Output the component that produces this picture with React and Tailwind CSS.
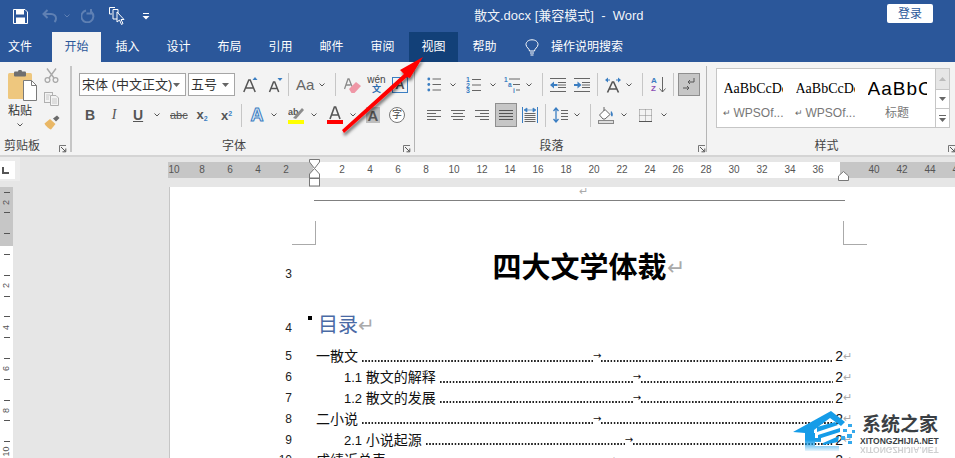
const CJK = "[font-family:'Liberation_Sans','Noto_Sans_CJK_SC',sans-serif]";

function Chev({ className = "", color = "#555" }) {
  return (
    <svg width="6" height="4" viewBox="0 0 6 4" className={`shrink-0 ${className}`}>
      <path d="M0.5 0.5 L3 3 L5.5 0.5" fill="none" stroke={color} strokeWidth="1" />
    </svg>
  );
}

function Sep({ className = "" }) {
  return <div className={`w-px h-[23px] bg-[#c6c6c6] shrink-0 ${className}`} />;
}

function Launcher({ className = "" }) {
  return (
    <svg width="8" height="8" viewBox="0 0 8 8" className={`shrink-0 ${className}`}>
      <path d="M0.5 7 V0.5 H7" fill="none" stroke="#777" />
      <path d="M2 2 L6.5 6.5 M6.8 3.5 V6.8 H3.5" fill="none" stroke="#555" />
    </svg>
  );
}

function Footer({ label, launcherClass = "mr-[3px]", className = "" }) {
  return (
    <div className={`mt-auto mb-[1px] h-[16px] grid grid-cols-[1fr_auto_1fr] items-center ${className}`}>
      <div />
      <div className="text-[12px] leading-[16px] text-[#444] mr-[18px]">{label}</div>
      <div className="justify-self-end flex items-end h-full pb-[1px]"><Launcher className={launcherClass} /></div>
    </div>
  );
}

function Lines({ rows, w = 14, h = 14, color = "#666", sw = 1 }) {
  return (
    <svg width={w} height={h} viewBox={`0 0 ${w} ${h}`} className="shrink-0">
      {rows.map(([x1, x2, y], i) => (
        <line key={i} x1={x1} x2={x2} y1={y + 0.5} y2={y + 0.5} stroke={color} strokeWidth={sw} />
      ))}
    </svg>
  );
}

function Letter({ children, className = "", w }) {
  return <div className={`shrink-0 text-center ${className}`} style={w ? { width: w } : undefined}>{children}</div>;
}

function GrowA({ up }) {
  return (
    <svg width="15" height="18" viewBox="0 0 15 18" className="shrink-0">
      <path d={up ? "M0.8 16 L5.8 4 H7.2 L12.2 16 M3 12 H10" : "M1.5 16 L5.5 6 H6.7 L10.7 16 M3.3 12.5 H9"} fill="none" stroke="#555" strokeWidth="1.5" />
      <path d={up ? "M9.5 4 L12 1 L14.5 4 Z" : "M9.5 2 H14.5 L12 5 Z"} fill="#3b7ec2" />
    </svg>
  );
}

function Bullets() {
  return (
    <svg width="14" height="15" viewBox="0 0 14 15" className="shrink-0">
      {[2, 7.5, 13].map((y) => (
        <g key={y}>
          <circle cx="1.8" cy={y} r="1.4" fill="#3b7ec2" />
          <line x1="5.5" x2="14" y1={y} y2={y} stroke="#666" />
        </g>
      ))}
    </svg>
  );
}

function Numbers() {
  return (
    <svg width="15" height="16" viewBox="0 0 15 16" className="shrink-0">
      {[["1", 2.5], ["2", 8], ["3", 13.5]].map(([t, y]) => (
        <g key={t}>
          <text x="0" y={y + 2.5} fontSize="7" fontWeight="700" fill="#3b7ec2" fontFamily="Liberation Sans">{t}</text>
          <line x1="6" x2="15" y1={y} y2={y} stroke="#666" />
        </g>
      ))}
    </svg>
  );
}

function Multi() {
  return (
    <svg width="17" height="17" viewBox="0 0 17 17" className="shrink-0">
      <text x="0" y="5.5" fontSize="6.5" fontWeight="700" fill="#3b7ec2" fontFamily="Liberation Sans">1</text>
      <line x1="5" x2="16" y1="3" y2="3" stroke="#666" />
      <text x="4" y="11" fontSize="6.5" fontWeight="700" fill="#3b7ec2" fontFamily="Liberation Sans">a</text>
      <line x1="9" x2="16" y1="8.5" y2="8.5" stroke="#666" />
      <text x="9" y="16.5" fontSize="6.5" fontWeight="700" fill="#3b7ec2" fontFamily="Liberation Sans">i</text>
      <line x1="12" x2="16" y1="14" y2="14" stroke="#666" />
    </svg>
  );
}

function Indent({ inc }) {
  return (
    <svg width="16" height="14" viewBox="0 0 16 14" className="shrink-0">
      {[0.5, 13.5].map((y) => <line key={y} x1="0" x2="16" y1={y} y2={y} stroke="#666" />)}
      {[4.5, 7, 9.5].map((y) => <line key={y} x1="8" x2="16" y1={y} y2={y} stroke="#666" />)}
      {inc
        ? <path d="M0 6 H3.5 V3.5 L7.5 7 L3.5 10.5 V8 H0 Z" fill="#3b7ec2" />
        : <path d="M7.5 6 H4 V3.5 L0 7 L4 10.5 V8 H7.5 Z" fill="#3b7ec2" />}
    </svg>
  );
}

function Scissors() {
  return (
    <svg width="15" height="15" viewBox="0 0 15 15" className="shrink-0">
      <path d="M3 0.5 L10 10 M12 0.5 L5 10" stroke="#a9a9a9" strokeWidth="1.4" fill="none" />
      <circle cx="3.5" cy="12" r="2.4" fill="none" stroke="#a9a9a9" strokeWidth="1.3" />
      <circle cx="11.5" cy="12" r="2.4" fill="none" stroke="#a9a9a9" strokeWidth="1.3" />
    </svg>
  );
}

function CopyIcon() {
  return (
    <svg width="15" height="14" viewBox="0 0 15 14" className="shrink-0">
      <rect x="0.5" y="0.5" width="8" height="10" fill="#f3f3f3" stroke="#b0b0b0" />
      <path d="M6.5 3.5 H12 L14.5 6 V13.5 H6.5 Z" fill="#f3f3f3" stroke="#b0b0b0" />
      <path d="M8 7 H13 M8 9 H13 M8 11 H13 M2 3 H6 M2 5 H5 M2 7 H5" stroke="#c8c8c8" />
    </svg>
  );
}

function Brush() {
  return (
    <svg width="16" height="15" viewBox="0 0 16 15" className="shrink-0">
      <path d="M9 3.5 L13 0.5 L15.5 3 L12 6.5 Z" fill="#6a6a6a" />
      <path d="M6 4 L11.5 9 L7 14.5 C5 14 1.5 11 0.5 8.5 Z" fill="#e9b765" />
    </svg>
  );
}

function Paste() {
  return (
    <svg width="29" height="31" viewBox="0 0 29 31" className="shrink-0">
      <rect x="0" y="3" width="24" height="26" rx="1.5" fill="#eec77e" />
      <rect x="6" y="1.5" width="12" height="5" rx="1" fill="#6f6f6f" />
      <rect x="10" y="0" width="4" height="3" rx="1.4" fill="#6f6f6f" />
      <path d="M15.5 10.5 H23.5 L28.5 15.5 V30.5 H15.5 Z" fill="#fff" stroke="#7a7a7a" />
      <path d="M23.5 10.5 V15.5 H28.5" fill="none" stroke="#7a7a7a" />
    </svg>
  );
}

function Highlighter() {
  return (
    <div className="w-[16px] h-[18px] flex flex-col items-center shrink-0">
      <svg width="16" height="14" viewBox="0 0 16 14">
        <text x="0" y="9" fontSize="9" fontWeight="700" fill="#555" fontFamily="Liberation Sans">ab</text>
        <path d="M5 12 L14 2 L16 4 L8 13 Z" fill="#8c8c8c" />
      </svg>
      <div className="w-[16px] h-[4px] bg-[#ffff00]" />
    </div>
  );
}

function ColorA() {
  return (
    <div className="w-[16px] h-[18px] flex flex-col items-center shrink-0">
      <svg width="16" height="14" viewBox="0 0 16 14">
        <path d="M3 13 L7.4 1 H8.6 L13 13 M4.8 9 H11.2" fill="none" stroke="#555" strokeWidth="1.6" />
      </svg>
      <div className="w-[16px] h-[4px] bg-[#ff0000]" />
    </div>
  );
}

function Eraser() {
  return (
    <svg width="17" height="18" viewBox="0 0 17 18" className="shrink-0">
      <path d="M0.5 13 L4 3 H5 L8 10.5 M2 9 H6.5" fill="none" stroke="#8a8a8a" strokeWidth="1.3" />
      <path d="M5 13 L12 6 L17 10 L10.5 17 H7.5 Z" fill="#ef97a6" />
    </svg>
  );
}

function Wen() {
  return (
    <div className="w-[17px] h-[19px] flex flex-col items-center shrink-0 leading-none">
      <div className="text-[10px] leading-[10px] text-[#444] whitespace-nowrap">wén</div>
      <div className="text-[9px] leading-[9px] text-[#2b6cb0] font-bold">文</div>
    </div>
  );
}

function BoxA() {
  return (
    <div className="w-[16px] h-[16px] border border-[#3b7ec2] flex items-center justify-center text-[13px] leading-none text-[#555] font-bold shrink-0">A</div>
  );
}

function CircleZi() {
  return (
    <div className="w-[16px] h-[16px] rounded-full border border-[#777] flex items-center justify-center text-[10px] leading-none text-[#444] shrink-0 bg-white">字</div>
  );
}

function Direction() {
  return (
    <svg width="16" height="16" viewBox="0 0 16 16" className="shrink-0">
      <path d="M2.5 15.5 L7.4 5 H8.6 L13.5 15.5 M4.5 12 H11.5" fill="none" stroke="#555" strokeWidth="1.6" />
      <path d="M0 3 L3 0.5 V5.5 Z M16 3 L13 0.5 V5.5 Z" fill="#3b7ec2" />
      <path d="M3 3 H5 M11 3 H13" stroke="#3b7ec2" />
    </svg>
  );
}

function Sort() {
  return (
    <div className="flex items-center shrink-0 w-[15px] h-[17px]">
      <div className="flex flex-col text-[8px] leading-[8px] font-bold w-[8px]">
        <span className="text-[#3b7ec2]">A</span>
        <span className="text-[#8a4fb5]">Z</span>
      </div>
      <svg width="7" height="16" viewBox="0 0 7 16"><path d="M3.5 0 V15 M0.5 11.5 L3.5 15 L6.5 11.5" fill="none" stroke="#666" /></svg>
    </div>
  );
}

function Pilcrow() {
  return (
    <div className="w-[22px] h-[23px] bg-[#c6c6c6] border border-[#8f8f8f] flex items-center justify-center shrink-0">
      <svg width="14" height="15" viewBox="0 0 14 15">
        <path d="M12 1 V5 H6 M8 3 L6 5 L8 7" fill="none" stroke="#555" />
        <path d="M1 11 H7 M5 9 L7 11 L5 13" fill="none" stroke="#555" />
      </svg>
    </div>
  );
}

function Distribute() {
  return (
    <svg width="16" height="16" viewBox="0 0 16 16" className="shrink-0">
      <path d="M0.5 0 V16 M15.5 0 V16" stroke="#3b7ec2" />
      <path d="M3 3 H13 M2 3 L5 1 V5 Z M14 3 L11 1 V5 Z" fill="#3b7ec2" stroke="#3b7ec2" strokeWidth="0.7" />
      {[6.5, 8.5, 10.5, 12.5, 14.5].map((y) => <line key={y} x1="2.5" x2="13.5" y1={y} y2={y} stroke="#666" />)}
    </svg>
  );
}

function LineSpacing() {
  return (
    <svg width="15" height="16" viewBox="0 0 15 16" className="shrink-0">
      <path d="M3 1 V15 M0.5 4 L3 1 L5.5 4 M0.5 12 L3 15 L5.5 12" fill="none" stroke="#3b7ec2" strokeWidth="1.3" />
      {[3.5, 6.5, 9.5, 12.5].map((y) => <line key={y} x1="8" x2="15" y1={y} y2={y} stroke="#666" />)}
    </svg>
  );
}

function Shading() {
  return (
    <svg width="16" height="18" viewBox="0 0 16 18" className="shrink-0">
      <path d="M1.5 9 L7 3.5 L12 8.5 L7 13 H5 Z" fill="#fff" stroke="#666" />
      <path d="M6 1 V5" stroke="#666" />
      <path d="M13 5 C15.5 7 15 10 14 10.5 C12.5 10 12.5 7 13 5" fill="#3b7ec2" />
      <rect x="0.5" y="14.5" width="15" height="3" fill="#ddd" stroke="#888" />
    </svg>
  );
}

function BordersIcon() {
  return (
    <svg width="13" height="13" viewBox="0 0 13 13" className="shrink-0">
      <path d="M0.5 0.5 H13 M0.5 6.5 H13 M0.5 0.5 V13 M6.5 0.5 V13 M12.5 0.5 V13" stroke="#888" strokeDasharray="1 1" fill="none" />
      <path d="M0 12.5 H13" stroke="#555" />
    </svg>
  );
}

const L = (rows) => <Lines rows={rows} />;

function Clipboard() {
  return (
    <div className="w-[70px] flex flex-col shrink-0">
      <div className="flex h-[70px]">
        <div className="w-[44px] flex flex-col items-start pl-[8px] pt-[8px]">
          <Paste />
          <div className="text-[12px] leading-[16px] text-[#333] mt-[2px]">粘贴</div>
          <Chev className="ml-[9px] mt-[4px]" />
        </div>
        <div className="flex flex-col items-start pt-[6px]">
          <Scissors />
          <div className="mt-[9px]"><CopyIcon /></div>
          <div className="mt-[9px]"><Brush /></div>
        </div>
      </div>
      <div className="mt-auto mb-[1px] h-[16px] flex items-center pl-[4px]">
        <div className="text-[12px] leading-[16px] text-[#444]">剪贴板</div>
        <Launcher className="ml-[19px] mt-[5px]" />
      </div>
    </div>
  );
}

function SelectBox({ text, className }) {
  return (
    <div className={`h-[23px] bg-white border border-[#a6a6a6] flex items-center pl-[2px] pr-[5px] shrink-0 ${className}`}>
      <span className="text-[13px] leading-none text-[#333] flex-1 whitespace-nowrap">{text}</span>
      <svg width="7" height="4" viewBox="0 0 7 4"><path d="M0 0 H7 L3.5 4 Z" fill="#666" /></svg>
    </div>
  );
}

function FontGroup() {
  return (
    <div className="w-[342px] flex flex-col shrink-0">
      <div className="flex items-center h-[23px] mt-[11px]">
        <SelectBox text="宋体 (中文正文)" className="ml-[7px] w-[107px]" />
        <SelectBox text="五号" className="ml-[2px] w-[47px]" />
        <div className="ml-[8px]"><GrowA up /></div>
        <div className="ml-[10px]"><GrowA /></div>
        <Sep className="ml-[5px]" />
        <div className="ml-[7px] w-[15px] text-[15px] leading-none text-[#666] whitespace-nowrap shrink-0">Aa</div>
        <Chev className="ml-[8px]" />
        <Sep className="ml-[10px]" />
        <div className="ml-[8px]"><Eraser /></div>
        <div className="ml-[7px]"><Wen /></div>
        <div className="ml-[7px]"><BoxA /></div>
      </div>
      <div className="flex items-center h-[24px] mt-[7px]">
        <Letter w={9} className="ml-[13px] text-[14px] leading-none font-bold text-[#555] [font-family:'Liberation_Sans',sans-serif]">B</Letter>
        <Letter w={8} className="ml-[16px] text-[14px] leading-none italic text-[#555] [font-family:'Liberation_Serif',serif]">I</Letter>
        <Letter w={9} className="ml-[15px] text-[14px] leading-none font-bold underline text-[#555]">U</Letter>
        <Chev className="ml-[12px]" />
        <Letter w={16} className="ml-[10px] text-[11px] leading-none text-[#555] line-through">abc</Letter>
        <Letter w={12} className="ml-[10px] text-[13px] leading-none font-bold text-[#555] whitespace-nowrap">x<span className="text-[7px] text-[#3b7ec2] align-[-2px]">2</span></Letter>
        <Letter w={13} className="ml-[12px] text-[13px] leading-none font-bold text-[#555] whitespace-nowrap">x<span className="text-[7px] text-[#3b7ec2] align-[4px]">2</span></Letter>
        <Sep className="ml-[8px]" />
        <Letter w={14} className="ml-[8px] text-[18px] leading-none font-bold text-[#dfeaf6] [-webkit-text-stroke:1px_#3b7ec2]">A</Letter>
        <Chev className="ml-[7px]" />
        <div className="ml-[11px]"><Highlighter /></div>
        <Chev className="ml-[7px]" />
        <div className="ml-[10px]"><ColorA /></div>
        <Chev className="ml-[7px]" />
        <div className="ml-[10px] w-[14px] h-[16px] bg-[#bdbdbd] flex items-center justify-center text-[15px] leading-none font-bold text-[#555] shrink-0">A</div>
        <div className="ml-[9px]"><CircleZi /></div>
      </div>
      <Footer label="字体" />
    </div>
  );
}

function ParagraphGroup() {
  return (
    <div className="w-[291px] flex flex-col shrink-0">
      <div className="flex items-center h-[23px] mt-[11px]">
        <div className="ml-[12px]"><Bullets /></div>
        <Chev className="ml-[9px]" />
        <div className="ml-[10px]"><Numbers /></div>
        <Chev className="ml-[9px]" />
        <div className="ml-[8px]"><Multi /></div>
        <Chev className="ml-[5px]" />
        <Sep className="ml-[10px]" />
        <div className="ml-[7px]"><Indent /></div>
        <div className="ml-[8px]"><Indent inc /></div>
        <Sep className="ml-[7px]" />
        <div className="ml-[7px]"><Direction /></div>
        <Chev className="ml-[5px]" />
        <Sep className="ml-[10px]" />
        <div className="ml-[8px]"><Sort /></div>
        <Sep className="ml-[7px]" />
        <div className="ml-[4px]"><Pilcrow /></div>
      </div>
      <div className="flex items-center h-[24px] mt-[7px]">
        <div className="ml-[12px]">{L([[0, 14, 2], [0, 9, 5], [0, 14, 8], [0, 9, 11]])}</div>
        <div className="ml-[10px]">{L([[0, 14, 2], [2, 12, 5], [0, 14, 8], [2, 12, 11]])}</div>
        <div className="ml-[10px]">{L([[0, 14, 2], [5, 14, 5], [0, 14, 8], [5, 14, 11]])}</div>
        <div className="ml-[6px] w-[22px] h-[24px] bg-[#c6c6c6] border border-[#8f8f8f] flex items-center justify-center shrink-0">
          <Lines rows={[[0, 14, 2], [0, 14, 5], [0, 14, 8], [0, 14, 11]]} color="#555" />
        </div>
        <div className="ml-[5px]"><Distribute /></div>
        <Sep className="ml-[7px]" />
        <div className="ml-[7px]"><LineSpacing /></div>
        <Chev className="ml-[6px]" />
        <Sep className="ml-[10px]" />
        <div className="ml-[7px]"><Shading /></div>
        <Chev className="ml-[7px]" />
        <div className="ml-[12px]"><BordersIcon /></div>
        <Chev className="ml-[9px]" />
      </div>
      <Footer label="段落" launcherClass="mr-0" />
    </div>
  );
}

function GalleryItem({ top, bottom, ret, wide }) {
  return (
    <div className="w-[72px] h-full flex flex-col items-center shrink-0">
      <div className={`h-[34px] w-[59px] overflow-hidden flex items-end whitespace-nowrap text-black ${wide ? "text-[19px] leading-[26px] pb-[1px] [font-family:'Liberation_Sans',sans-serif] tracking-[1px]" : "text-[14px] leading-[20px] pb-[4px] [font-family:'Liberation_Serif',serif]"}`}>
        {top}
      </div>
      <div className="h-[20px] w-[60px] flex items-center justify-center text-[12px] leading-none text-[#777] whitespace-nowrap">
        {ret && <span className="text-[9px] mr-[3px] text-[#666]">↵</span>}
        {bottom}
      </div>
    </div>
  );
}

function StylesGroup() {
  return (
    <div className="flex-1 flex flex-col min-w-0">
      <div className="ml-[9px] mt-[6px] w-[234px] h-[60px] border border-[#c6c6c6] bg-white flex shrink-0">
        <GalleryItem top="AaBbCcDd" bottom="WPSOf..." ret />
        <GalleryItem top="AaBbCcDd" bottom="WPSOf..." ret />
        <GalleryItem top="AaBbC" bottom="标题" wide />
        <div className="ml-auto w-[14px] flex flex-col border-l border-[#c6c6c6]">
          <div className="h-[21px] bg-[#e6e6e6] border-b border-[#c6c6c6] flex items-center justify-center">
            <svg width="7" height="4" viewBox="0 0 7 4"><path d="M0 4 H7 L3.5 0 Z" fill="#bbb" /></svg>
          </div>
          <div className="h-[19px] border-b border-[#c6c6c6] flex items-center justify-center">
            <svg width="7" height="4" viewBox="0 0 7 4"><path d="M0 0 H7 L3.5 4 Z" fill="#666" /></svg>
          </div>
          <div className="flex-1 flex flex-col items-center justify-center gap-[2px]">
            <div className="w-[7px] h-px bg-[#666]" />
            <svg width="7" height="4" viewBox="0 0 7 4"><path d="M0 0 H7 L3.5 4 Z" fill="#666" /></svg>
          </div>
        </div>
      </div>
      <Footer label="样式" launcherClass="mr-[-1px]" className="pl-[9px]" />
    </div>
  );
}

function Ribbon() {
  return (
    <div className="h-[93px] bg-[#f3f3f3] flex shrink-0">
      <Clipboard />
      <div className="w-[2px] mt-[4px] mb-[3px] bg-[#c6c6c6] shrink-0" />
      <FontGroup />
      <div className="w-[1px] mt-[4px] mb-[3px] bg-[#b5b5b5] shrink-0" />
      <ParagraphGroup />
      <div className="w-[1px] mt-[4px] mb-[3px] bg-[#b5b5b5] shrink-0" />
      <StylesGroup />
    </div>
  );
}

function TitleBar() {
  return (
    <div className="h-[32px] bg-[#2b579a] flex items-center shrink-0 text-white relative">
      <svg width="15" height="15" viewBox="0 0 15 15" className="ml-[13px] shrink-0">
        <path d="M0.5 0.5 H12 L14.5 3 V14.5 H0.5 Z" fill="none" stroke="#fff" />
        <rect x="3" y="1" width="8" height="4.5" fill="#fff" />
        <rect x="3" y="8.5" width="9" height="5.5" fill="#fff" />
      </svg>
      <svg width="15" height="14" viewBox="0 0 15 14" className="ml-[14px] shrink-0">
        <path d="M2 5 H9 C12 5 14 7 14 9.5 C14 11 13.5 12 12.5 13 M5.5 1 L1.5 5 L5.5 9" fill="none" stroke="#5f80b3" strokeWidth="2" />
      </svg>
      <Chev className="ml-[7px]" color="#5f80b3" />
      <svg width="14" height="14" viewBox="0 0 14 14" className="ml-[11px] shrink-0">
        <path d="M10.5 3 A6 6 0 1 1 5 1.5 M10 0 V4.5 H5.5" fill="none" stroke="#5f80b3" strokeWidth="2" />
      </svg>
      <svg width="17" height="18" viewBox="0 0 17 18" className="ml-[14px] shrink-0">
        <path d="M0.5 0.5 H6 M0.5 0.5 V7 H3" fill="none" stroke="#fff" />
        <path d="M4 2.5 H9 V12 H4 Z" fill="none" stroke="#fff" />
        <path d="M8 5 L8 15 L10.5 13 L12.5 17.5 L14 16.5 L12 12.5 L15 12.5 Z" fill="#2b579a" stroke="#fff" />
      </svg>
      <svg width="8" height="7" viewBox="0 0 8 7" className="ml-[16px] shrink-0">
        <path d="M1 0.5 H7" stroke="#fff" />
        <path d="M0.5 3 H7.5 L4 6.5 Z" fill="#fff" />
      </svg>
      <div className="absolute left-[474px] top-[7px] text-[13px] leading-[17px] whitespace-pre text-white/95">散文.docx [兼容模式]  -  Word</div>
      <div className="ml-auto mr-[22px] mb-[5px] w-[46px] h-[19px] bg-white rounded-[2px] flex items-center justify-center text-[12px] leading-none text-[#2b579a]">登录</div>
    </div>
  );
}

function Tabs() {
  const names = ["插入", "设计", "布局", "引用", "邮件", "审阅"];
  return (
    <div className="h-[30px] bg-[#2b579a] flex shrink-0 text-[12px] leading-none text-white">
      <div className="w-[52px] pl-[8px] flex items-center">文件</div>
      <div className="w-[49px] bg-[#f3f3f3] text-[#2b579a] flex items-center justify-center">开始</div>
      <div className="flex ml-px">
        {names.map((n) => (
          <div key={n} className="w-[51px] flex items-center justify-center">{n}</div>
        ))}
      </div>
      <div className="w-[49px] ml-px bg-[#124078] flex items-center justify-center">视图</div>
      <div className="w-[51px] ml-[1px] flex items-center justify-center">帮助</div>
      <svg width="14" height="17" viewBox="0 0 14 17" className="ml-[15px] self-center shrink-0">
        <path d="M4.5 12 C4.5 9.5 1 8.5 1 5.5 C1 2.8 3.5 0.8 7 0.8 C10.5 0.8 13 2.8 13 5.5 C13 8.5 9.5 9.5 9.5 12 Z" fill="none" stroke="#fff" />
        <path d="M5 14 H9 M5.5 16 H8.5" stroke="#fff" />
      </svg>
      <div className="ml-[12px] flex items-center whitespace-nowrap">操作说明搜索</div>
    </div>
  );
}

function RulerNum({ n }) {
  return <div className="w-[28px] shrink-0 text-center">{n}</div>;
}

function HRuler() {
  const white = [2, 4, 6, 8, 10, 12, 14, 16, 18, 20, 22, 24, 26, 28, 30, 32, 34, 36];
  return (
    <div className="h-[16px] flex text-[10px] leading-[16px] text-[#555] [font-family:'Liberation_Sans',sans-serif] shrink-0 overflow-hidden">
      <div className="w-[145px] bg-[#c6c6c6] flex shrink-0">
        <div className="w-[20px] shrink-0 text-center"><span className="-ml-[8px] inline-block">10</span></div>
        {[8, 6, 4, 2].map((n) => <RulerNum key={n} n={n} />)}
      </div>
      <div className="w-[527px] bg-white flex pl-[15px] shrink-0">
        {white.map((n) => <RulerNum key={n} n={n} />)}
      </div>
      <div className="flex-1 bg-[#c6c6c6] flex pl-[20px] min-w-0">
        {[40, 42, 44, 46].map((n) => <RulerNum key={n} n={n} />)}
      </div>
    </div>
  );
}

function VRuler() {
  const slots = ["-", "2", "-", "", "-", "", "-", "", "-", "2", "-", "", "-", "4", "-", "", "-", "6", "-", "", "-", "8", "-", "", "-", "10"];
  return (
    <div className="w-[13px] flex-1 bg-[linear-gradient(#c6c6c6_59px,#fff_59px)] text-[9px] text-[#555] [font-family:'Liberation_Sans',sans-serif] overflow-hidden">
      {slots.map((s, i) => (
        <div key={i} className="h-[10.4px] w-[13px] flex items-center justify-center">
          {s === "-" ? (
            <div className="w-[6px] h-px bg-[#555]" />
          ) : s ? (
            <span className="-rotate-90 leading-none">{s}</span>
          ) : null}
        </div>
      ))}
    </div>
  );
}

function LineNo({ n, className = "" }) {
  return (
    <div className={`w-[122px] text-right text-[12px] leading-none text-[#222] shrink-0 [font-family:'Liberation_Sans',sans-serif] ${className}`}>{n}</div>
  );
}

function TocRow({ n, num, text, indent, lead }) {
  const dots = "h-[2px] bg-[linear-gradient(90deg,#222_1.4px,transparent_1.4px)] bg-[length:3.2px_2px] bg-repeat-x";
  return (
    <div className="h-[20.8px] flex items-center">
      <LineNo n={n} />
      <div className="ml-[24px] w-[535px] flex items-center text-[14px] leading-none text-[#111] shrink-0" style={{ paddingLeft: indent }}>
        <span className="whitespace-nowrap">
          {num && <span className="text-[13px] [font-family:'Liberation_Sans',sans-serif]">{num} </span>}
          {text}
        </span>
        <div className={`${dots} ml-[4px] mt-[9px] shrink-0`} style={{ width: lead }} />
        <span className="text-[10px] w-[8px] text-center leading-none [font-family:'DejaVu_Sans',sans-serif]">→</span>
        <div className={`${dots} flex-1 mt-[9px]`} />
        <span className="ml-[2px] text-[14px] [font-family:'Liberation_Sans',sans-serif]">2</span>
        <span className="text-[11px] w-[8px] text-[#aaa]">↵</span>
      </div>
    </div>
  );
}

function Page() {
  return (
    <div className="flex-1 bg-white border-l border-[#c6c6c6] ml-px min-h-0 overflow-hidden">
      <div className="ml-[144px] w-[531px] h-[14px] border-b border-[#808080] text-center text-[11px] leading-[9px] pl-[8px]"><span className="text-[#aaa]">↵</span></div>
      <div className="flex mt-[20px] h-[24px]">
        <div className="ml-[122px] w-[24px] border-r border-b border-[#aaa]" />
        <div className="ml-[527px] w-[24px] border-l border-b border-[#aaa]" />
      </div>
      <div className="h-[46px] flex items-center">
        <LineNo n="3" className="mt-[11px]" />
        <div className="ml-[22px] w-[531px] flex justify-center items-center">
          <span className="text-[29px] leading-none font-bold text-black whitespace-nowrap">四大文学体裁</span>
          <span className="text-[22px] leading-none text-[#aaa] mr-[-20px] w-[20px]">↵</span>
        </div>
      </div>
      <div className="h-[55px] flex items-center pt-[13px]">
        <LineNo n="4" className="mt-[5px]" />
        <div className="ml-[16px] w-[4px] h-[4px] bg-black -mt-[15px] shrink-0" />
        <div className="ml-[6px] text-[20px] leading-none text-[#4a6aa5] whitespace-nowrap">目录<span className="text-[20px] text-[#aaa]">↵</span></div>
      </div>
      <TocRow n="5" text="一散文" indent={0} lead={231} />
      <TocRow n="6" num="1.1" text="散文的解释" indent={28} lead={193} />
      <TocRow n="7" num="1.2" text="散文的发展" indent={28} lead={193} />
      <TocRow n="8" text="二小说" indent={0} lead={231} />
      <TocRow n="9" num="2.1" text="小说起源" indent={28} lead={199} />
      <TocRow n="10" text="成绩近总表" indent={0} lead={218} />
    </div>
  );
}

function Watermark() {
  return (
    <div className="absolute left-[793px] top-[408px] w-[162px] h-[50px] flex pointer-events-none">
      <svg width="62" height="50" viewBox="0 0 62 50" className="shrink-0">
        <defs>
          <linearGradient id="fade" x1="0" x2="0" y1="0" y2="1">
            <stop offset="0.72" stopColor="#159ce8" />
            <stop offset="1" stopColor="#159ce8" stopOpacity="0.1" />
          </linearGradient>
        </defs>
        <path d="M0 24 L38 3 L52 14 L48 18 L37 10 L21 22 V25 H22 V30 H28 V34 H22 V38 H46 V43 H12 V25 Z" fill="url(#fade)" />
        <path d="M24 19 L42 14 L45 17 L24 24 Z M25 27 L47 20 V24 L25 31 Z M30 35 L46 28 L45 34 L30 37 Z" fill="#159ce8" />
        <path d="M50 21 h4 v3 h-4 Z M55 16 h4 v3 h-4 Z M54 26 h5 v4 h-5 Z M48 28 h4 v4 h-4 Z M59 22 h3 v3 h-3 Z M55 33 h4 v3 h-4 Z" fill="#35a9ec" />
      </svg>
      <div className="ml-[5px] flex flex-col w-[84px] pt-[5px]">
        <div className="ml-[2px] text-[19px] leading-[23px] font-bold text-[#3a3f44] whitespace-nowrap">系统之家</div>
        <div className="text-[8.5px] leading-[10px] font-bold text-[#3a3f44] whitespace-nowrap [font-family:'Liberation_Sans',sans-serif]">XITONGZHIJIA.NET</div>
        <div className="text-[8.5px] leading-[8px] font-bold text-[#3a3f44]/25 whitespace-nowrap scale-y-[-1] [font-family:'Liberation_Sans',sans-serif]">XITONGZHIJIA.NET</div>
      </div>
    </div>
  );
}

export default function App() {
  return (
    <div className={`relative w-[955px] h-[458px] overflow-hidden flex flex-col bg-[#e6e6e6] ${CJK}`}>
      <TitleBar />
      <Tabs />
      <Ribbon />
      <div className="h-[2px] bg-[#d4d4d4] shrink-0" />
      <div className="flex-1 flex min-h-0">
        <div className="w-[168px] flex flex-col shrink-0">
          <div className="w-[20px] h-[24px] bg-[#ececec] pt-[4px] shrink-0">
            <div className="w-[15px] h-[18px] bg-white flex items-center pl-[2px]">
              <svg width="7" height="7" viewBox="0 0 7 7"><path d="M1 0 V6 H7" fill="none" stroke="#555" strokeWidth="2" /></svg>
            </div>
          </div>
          <div className="h-[6px] shrink-0" />
          <VRuler />
        </div>
        <div className="flex-1 flex flex-col min-w-0">
          <div className="h-[5px] shrink-0" />
          <HRuler />
          <div className="h-[9px] shrink-0" />
          <Page />
        </div>
      </div>

      {/* ruler indent markers lie over the ruler */}
      <svg width="12" height="28" viewBox="0 0 12 28" className="absolute left-[309px] top-[159px]">
        <path d="M0.5 0.5 H10.5 V3 L5.5 9.5 L0.5 3 Z" fill="#fff" stroke="#777" />
        <path d="M5.5 9.5 L10.5 15 V19 H0.5 V15 Z" fill="#fff" stroke="#777" />
        <rect x="0.5" y="19.5" width="10" height="7.5" fill="#fff" stroke="#777" />
      </svg>
      <svg width="12" height="10" viewBox="0 0 12 10" className="absolute left-[838px] top-[171px]">
        <path d="M5.5 0.5 L10.5 5 V9.5 H0.5 V5 Z" fill="#fff" stroke="#777" />
      </svg>

      {/* red annotation arrow */}
      <svg width="120" height="100" viewBox="0 0 120 100" className="absolute left-[325px] top-[50px] overflow-visible">
        <defs>
          <filter id="sh" x="-20%" y="-20%" width="150%" height="150%">
            <feDropShadow dx="1" dy="3" stdDeviation="1.6" floodColor="#000" floodOpacity="0.5" />
          </filter>
        </defs>
        <path d="M98 7 L75 20 L79 24 L17 80 L19 83 L82 27 L85 28 Z" fill="#f00" filter="url(#sh)" />
      </svg>

      <Watermark />
    </div>
  );
}
